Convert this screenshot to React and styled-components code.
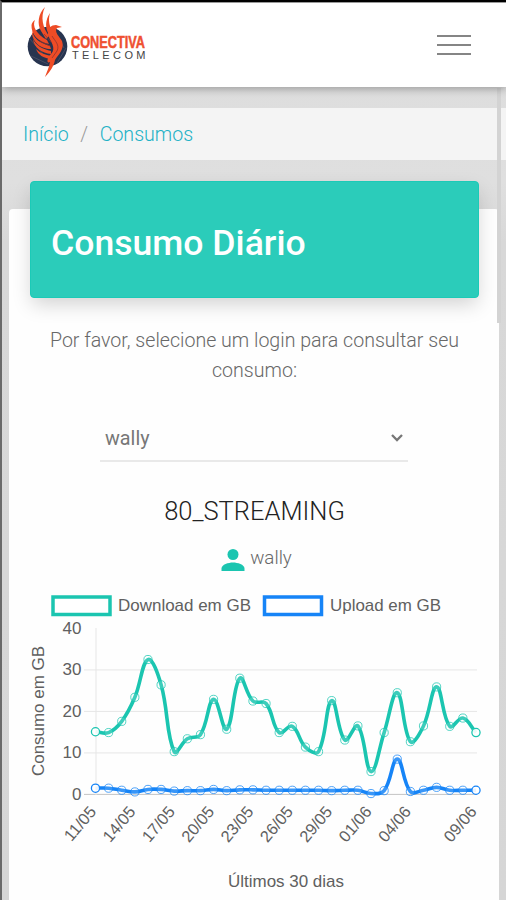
import React from "react";
import styled, { createGlobalStyle } from "styled-components";

const GlobalStyle = createGlobalStyle`
  * { box-sizing: border-box; }
  body { margin: 0; background: #dfdfdf; font-family: Roboto, "Liberation Sans", sans-serif; overflow: hidden; }
`;

const Screen = styled.div`
  position: relative;
  height: 900px;
  overflow: hidden;
  display: flex;
  flex-direction: column;
  border-top: 2px solid #000;
  border-left: 2px solid #6a6a6a;
  background: linear-gradient(#dcdcdc, #dfdfdf 180px, #d8d8d8 240px, #d6d6d6);
`;

const Header = styled.header`
  flex: none;
  height: 85px;
  padding: 0 35px 0 25px;
  display: flex;
  justify-content: space-between;
  background: #fff;
  border-top: 1px solid #999;
  box-shadow: 0 2px 8px rgba(0, 0, 0, 0.3);
  z-index: 1;
`;

const Logo = styled.svg`
  width: 122px;
  height: 78px;
  overflow: visible;
`;

const MenuButton = styled.button`
  width: 34px;
  height: 20px;
  margin: 32px 0 0;
  padding: 0;
  border: 0;
  background: none;
  display: flex;
  flex-direction: column;
  justify-content: space-between;
`;

const MenuBar = styled.span`
  display: block;
  width: 100%;
  height: 2px;
  background: #858585;
`;

const Breadcrumb = styled.nav`
  flex: none;
  height: 52px;
  margin-top: 21px;
  padding: 0 21px;
  display: flex;
  align-items: center;
  background: #f4f4f4;
  font-size: 19.6px;
  font-weight: 300;
`;

const Crumb = styled.a`
  color: #22b1c6;
`;

const Slash = styled.span`
  margin: 0 11.5px;
  color: #999;
`;

const Card = styled.main`
  flex: 1;
  margin: 49px 7px 0;
  padding: 0 20px 0 21px;
  display: flex;
  flex-direction: column;
  align-items: center;
  background: #fefefe;
  border-radius: 4px 4px 0 0;
`;

const Banner = styled.div`
  align-self: stretch;
  flex: none;
  height: 117px;
  margin-top: -28px;
  padding: 7px 20px 0;
  display: flex;
  align-items: center;
  background: #2bccba;
  border: 1px solid #1bcab7;
  border-radius: 4px;
  box-shadow: 0 8px 20px -2px rgba(0, 0, 0, 0.18);
`;

const Title = styled.h1`
  margin: 0;
  color: #fff;
  font-size: 35.6px;
  font-weight: 500;
  line-height: 42px;
  white-space: nowrap;
`;

const Intro = styled.p`
  width: 430px;
  margin: 28px 0 0;
  color: #686868;
  font-size: 19.6px;
  font-weight: 300;
  line-height: 29.6px;
  text-align: center;
`;

const Select = styled.div`
  width: 308px;
  height: 48px;
  margin: 29px 1px 0 0;
  padding: 2px 4px 0 5px;
  display: flex;
  align-items: center;
  justify-content: space-between;
  border-bottom: 2px solid #e9e9e9;
  color: #777;
  font-size: 19.8px;
`;

const Plan = styled.h2`
  margin: 32px 0 0;
  color: #222;
  font-size: 25.5px;
  font-weight: 300;
  line-height: 34px;
`;

const User = styled.div`
  height: 30px;
  margin-top: 15px;
  display: flex;
  align-items: center;
  gap: 5px;
  padding-left: 4px;
  color: #686868;
  font-size: 18.8px;
  font-weight: 300;
  svg { margin-top: 4px; }
  span { margin-top: 0; }
`;

const Chart = styled.svg`
  flex: none;
  width: 469px;
  height: 320px;
  margin: 9px 0 0 12px;
  font-family: "Liberation Sans", sans-serif;
  overflow: visible;
`;

const ScrollThumb = styled.div`
  position: absolute;
  top: 86px;
  right: 5px;
  width: 4px;
  height: 235px;
  background: #d3d3d3;
`;

const download = [15.1, 14.9, 17.6, 23.4, 32.5, 26.4, 10.3, 13.4, 14.4, 22.9, 15.7, 28, 22.5, 21.9, 14.9, 16.4, 11.4, 10.3, 22.6, 13.1, 16.5, 5.5, 14.9, 24.5, 12.7, 16.5, 25.9, 16.4, 18.4, 14.9];
const upload = [1.5, 1.5, 1, 0.6, 1.2, 1.2, 0.8, 0.9, 0.9, 1.2, 0.9, 1.1, 1.1, 1, 1, 1, 1, 1, 0.9, 1, 1, 0.2, 0.9, 8.5, 0.7, 1, 1.7, 1, 1, 1];
const dates = [["11/05", 0], ["14/05", 3], ["17/05", 6], ["20/05", 9], ["23/05", 12], ["26/05", 15], ["29/05", 18], ["01/06", 21], ["04/06", 24], ["09/06", 29]];

const X0 = 95.5;
const Y0 = 794.4;
const px = (i) => X0 + i * 13.12;
const py = (v) => Y0 - v * 4.15;

function curve(values) {
  const pts = values.map((v, i) => [px(i), py(v)]);
  const handles = pts.map((p, i) => {
    const a = pts[i - 1] || p;
    const b = pts[i + 1] || p;
    const d1 = Math.hypot(p[0] - a[0], p[1] - a[1]);
    const d2 = Math.hypot(b[0] - p[0], b[1] - p[1]);
    const f1 = (0.4 * d1) / (d1 + d2);
    const f2 = (0.4 * d2) / (d1 + d2);
    const dx = b[0] - a[0];
    const dy = b[1] - a[1];
    return [[p[0] - f1 * dx, p[1] - f1 * dy], [p[0] + f2 * dx, p[1] + f2 * dy]];
  });
  return pts.map((p, i) => (i ? `C${handles[i - 1][1]} ${handles[i][0]} ${p}` : `M${p}`)).join(" ");
}

function Series({ values, color }) {
  return (
    <g fill="none" stroke={color}>
      <path d={curve(values)} strokeWidth="3.6" />
      {values.map((v, i) => {
        const isEnd = i === 0 || i === values.length - 1;
        return (
          <circle key={i} cx={px(i)} cy={py(v)} r="4.1" strokeWidth={isEnd ? 1.3 : 1} strokeOpacity={isEnd ? 1 : 0.75} fill="#fff" fillOpacity={isEnd ? 0.9 : 0.15} />
        );
      })}
    </g>
  );
}

function UsageChart() {
  return (
    <Chart viewBox="26 582 469 320">
      <g fill="#fff" strokeWidth="3.5">
        <rect x="53" y="597" width="57" height="17.500" stroke="#1bc5b0" />
        <rect x="264.500" y="597" width="57" height="17.500" stroke="#1684f7" />
      </g>
      <g fill="#606060" fontSize="17">
        <text x="118" y="611" textLength="133" lengthAdjust="spacingAndGlyphs">Download em GB</text>
        <text x="330" y="611" textLength="111" lengthAdjust="spacingAndGlyphs">Upload em GB</text>
        <text x="228" y="887" textLength="116" lengthAdjust="spacingAndGlyphs">Últimos 30 dias</text>
        <text transform="translate(44 776) rotate(-90)" textLength="130" lengthAdjust="spacingAndGlyphs">Consumo em GB</text>
        {[0, 10, 20, 30, 40].map((v) => (
          <text key={v} x="81.500" y={py(v) + 5.500} textAnchor="end">{v}</text>
        ))}
        {dates.map(([label, i]) => (
          <text key={label} transform={`translate(${px(i) + 1.5} 812) rotate(-50)`} fontSize="16.300" textAnchor="end">{label}</text>
        ))}
      </g>
      <g stroke="#e6e6e6">
        {[10, 20, 30].map((v) => (
          <line key={v} x1="84" x2="477" y1={py(v)} y2={py(v)} />
        ))}
        <line x1="84" x2="477" y1={Y0} y2={Y0} stroke="#c4c4c4" />
        <line x1="96" x2="96" y1="628" y2="795" />
      </g>
      <Series values={upload} color="#1684f7" />
      <Series values={download} color="#1bc5b0" />
    </Chart>
  );
}

function ConectivaLogo() {
  return (
    <Logo viewBox="27 3 122 78">
      <circle cx="47.500" cy="46.500" r="19.800" fill="#27344f" />
      <path d="M29 38l15 17M31 56l17 8M54 30l10 18M57 63l9-15" stroke="#4c5368" strokeWidth=".8" />
      <g fill="#ee4c26">
        <path d="M45 7C38 14 37 24 41 31L46 39L49 36C43 28 40 17 45 7Z" />
        <path d="M50 13C45 20 45 29 49 34L53 32C49 26 48 20 50 13Z" />
        <path d="M35 20C32 26 36 34 47 40L49 44C38 42 31 34 31.500 25C32 23 33 21 35 20Z" />
        <path d="M32 30C33 38 39 43 50 46L51 49C41 49 31 42 32 30Z" />
        <path d="M33 39C36 46 43 49 51 51L51 54C42 53 34 48 33 39Z" />
        <path d="M36 49C40 53 46 55 51 56L50 59C44 58 38 55 36 49Z" />
        <path d="M48 35C48 28 51 25 56 25L62 27L57 28C54 32 59 36 62 41C65 49 58 55 55 60C54 65 51 71 45 77C47 71 49 68 50 62C46 64 47 58 51 54C57 48 50 41 48 35Z" />
      </g>
      <path d="M52 36c3 5 8 9 5 15l-5 7M44 34l8 9M40 41l10 5" stroke="#8f3430" strokeWidth=".8" fill="none" />
      <g fontFamily="Liberation Sans, sans-serif">
        <text x="71" y="47.500" fontSize="16.500" fontWeight="700" fill="#ef5031" stroke="#ef5031" strokeWidth=".5" textLength="74" lengthAdjust="spacingAndGlyphs">CONECTIVA</text>
        <text x="72" y="58.800" fontSize="11" fill="#444" textLength="73.500">TELECOM</text>
      </g>
    </Logo>
  );
}

export default function App() {
  return (
    <Screen>
      <GlobalStyle />
      <Header>
        <ConectivaLogo />
        <MenuButton aria-label="Menu">
          <MenuBar />
          <MenuBar />
          <MenuBar />
        </MenuButton>
      </Header>
      <Breadcrumb>
        <Crumb>Início</Crumb>
        <Slash>/</Slash>
        <Crumb>Consumos</Crumb>
      </Breadcrumb>
      <Card>
        <Banner>
          <Title>Consumo Diário</Title>
        </Banner>
        <Intro>Por favor, selecione um login para consultar seu consumo:</Intro>
        <Select>
          wally
          <svg width="14" height="10" viewBox="0 0 14 10">
            <path d="M2 2l5 5 5-5" fill="none" stroke="#777" strokeWidth="2.300" />
          </svg>
        </Select>
        <Plan>80_STREAMING</Plan>
        <User>
          <svg width="24" height="24" viewBox="0 0 24 24" fill="#1bc5b0">
            <circle cx="12" cy="6.500" r="5.500" />
            <path d="M.5 23v-2.500c0-4 7-6 11.500-6s11.500 2 11.500 6V23z" />
          </svg>
          <span>wally</span>
        </User>
        <UsageChart />
      </Card>
      <ScrollThumb />
    </Screen>
  );
}
